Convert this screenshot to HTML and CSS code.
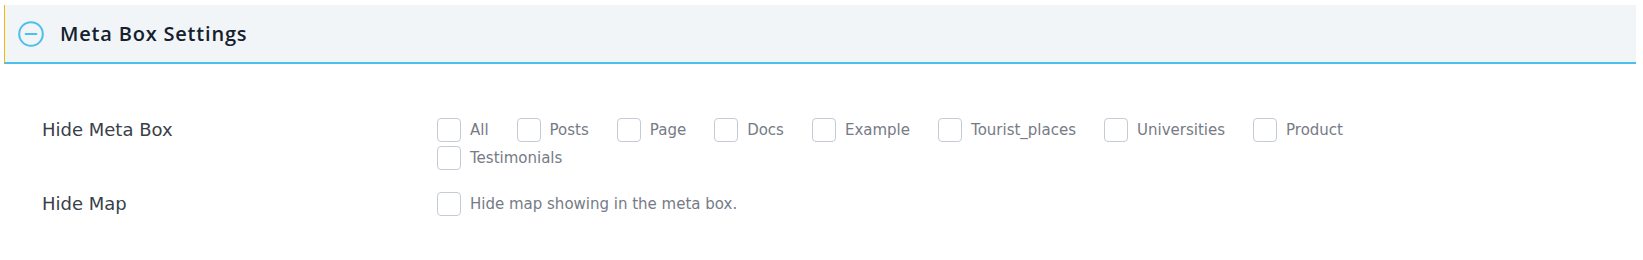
FILE: index.html
```html
<!DOCTYPE html>
<html lang="en">
<head>
<meta charset="utf-8">
<title>Meta Box Settings</title>
<link rel="stylesheet" href="styles.css">
</head>
<body>
<div class="panel">
  <div class="panel-head">
    <svg class="toggle" width="26" height="26" viewBox="0 0 26 26" aria-hidden="true">
      <circle cx="13" cy="13" r="11.8" fill="none" stroke="#4cbfec" stroke-width="2"/>
      <line x1="7.6" y1="13" x2="18.4" y2="13" stroke="#4cbfec" stroke-width="2" stroke-linecap="round"/>
    </svg>
    <h2 class="panel-title">Meta Box Settings</h2>
  </div>
  <div class="panel-body">
    <div class="field-row">
      <div class="field-label">Hide Meta Box</div>
      <div class="field-control options">
        <label class="opt"><span class="box"></span><span class="opt-text">All</span></label>
        <label class="opt"><span class="box"></span><span class="opt-text">Posts</span></label>
        <label class="opt"><span class="box"></span><span class="opt-text">Page</span></label>
        <label class="opt"><span class="box"></span><span class="opt-text">Docs</span></label>
        <label class="opt"><span class="box"></span><span class="opt-text">Example</span></label>
        <label class="opt"><span class="box"></span><span class="opt-text">Tourist_places</span></label>
        <label class="opt"><span class="box"></span><span class="opt-text">Universities</span></label>
        <label class="opt"><span class="box"></span><span class="opt-text">Product</span></label>
        <label class="opt"><span class="box"></span><span class="opt-text">Testimonials</span></label>
      </div>
    </div>
    <div class="field-row">
      <div class="field-label">Hide Map</div>
      <div class="field-control">
        <label class="opt"><span class="box"></span><span class="opt-text">Hide map showing in the meta box.</span></label>
      </div>
    </div>
  </div>
</div>
</body>
</html>
```

FILE: styles.css
```css
html, body {
  margin: 0;
  padding: 0;
  background: #ffffff;
}

body {
  font-family: "DejaVu Sans", "Open Sans", sans-serif;
}

.panel {
  margin: 5px 7px 0 4px;
}

.panel-head {
  height: 57px;
  display: flex;
  align-items: center;
  gap: 16px;
  padding-left: 13px;
  background: #f1f5f8;
  border-left: 1px solid #f0b90b;
  border-bottom: 2px solid #4cbfec;
}

.toggle {
  display: block;
  flex: none;
}

.panel-title {
  margin: 0;
  font-family: "Open Sans", "DejaVu Sans", sans-serif;
  font-size: 20px;
  font-weight: 600;
  letter-spacing: 0.8px;
  color: #14202e;
}

.panel-body {
  padding: 54px 0 0 38px;
  display: flex;
  flex-direction: column;
  gap: 22px;
}

.field-row {
  display: grid;
  grid-template-columns: 395px 1fr;
  align-items: start;
}

.field-label {
  font-size: 18px;
  line-height: 24px;
  color: #3a4048;
}

.options {
  display: flex;
  flex-wrap: wrap;
  column-gap: 28px;
  row-gap: 4px;
  max-width: 1000px;
}

.opt {
  display: flex;
  align-items: center;
  gap: 9px;
  font-size: 15px;
  line-height: 24px;
  color: #767b86;
}

.box {
  display: block;
  width: 24px;
  height: 24px;
  box-sizing: border-box;
  border: 1px solid #c5cbd4;
  border-radius: 4px;
  background: #ffffff;
  flex: none;
}
```
